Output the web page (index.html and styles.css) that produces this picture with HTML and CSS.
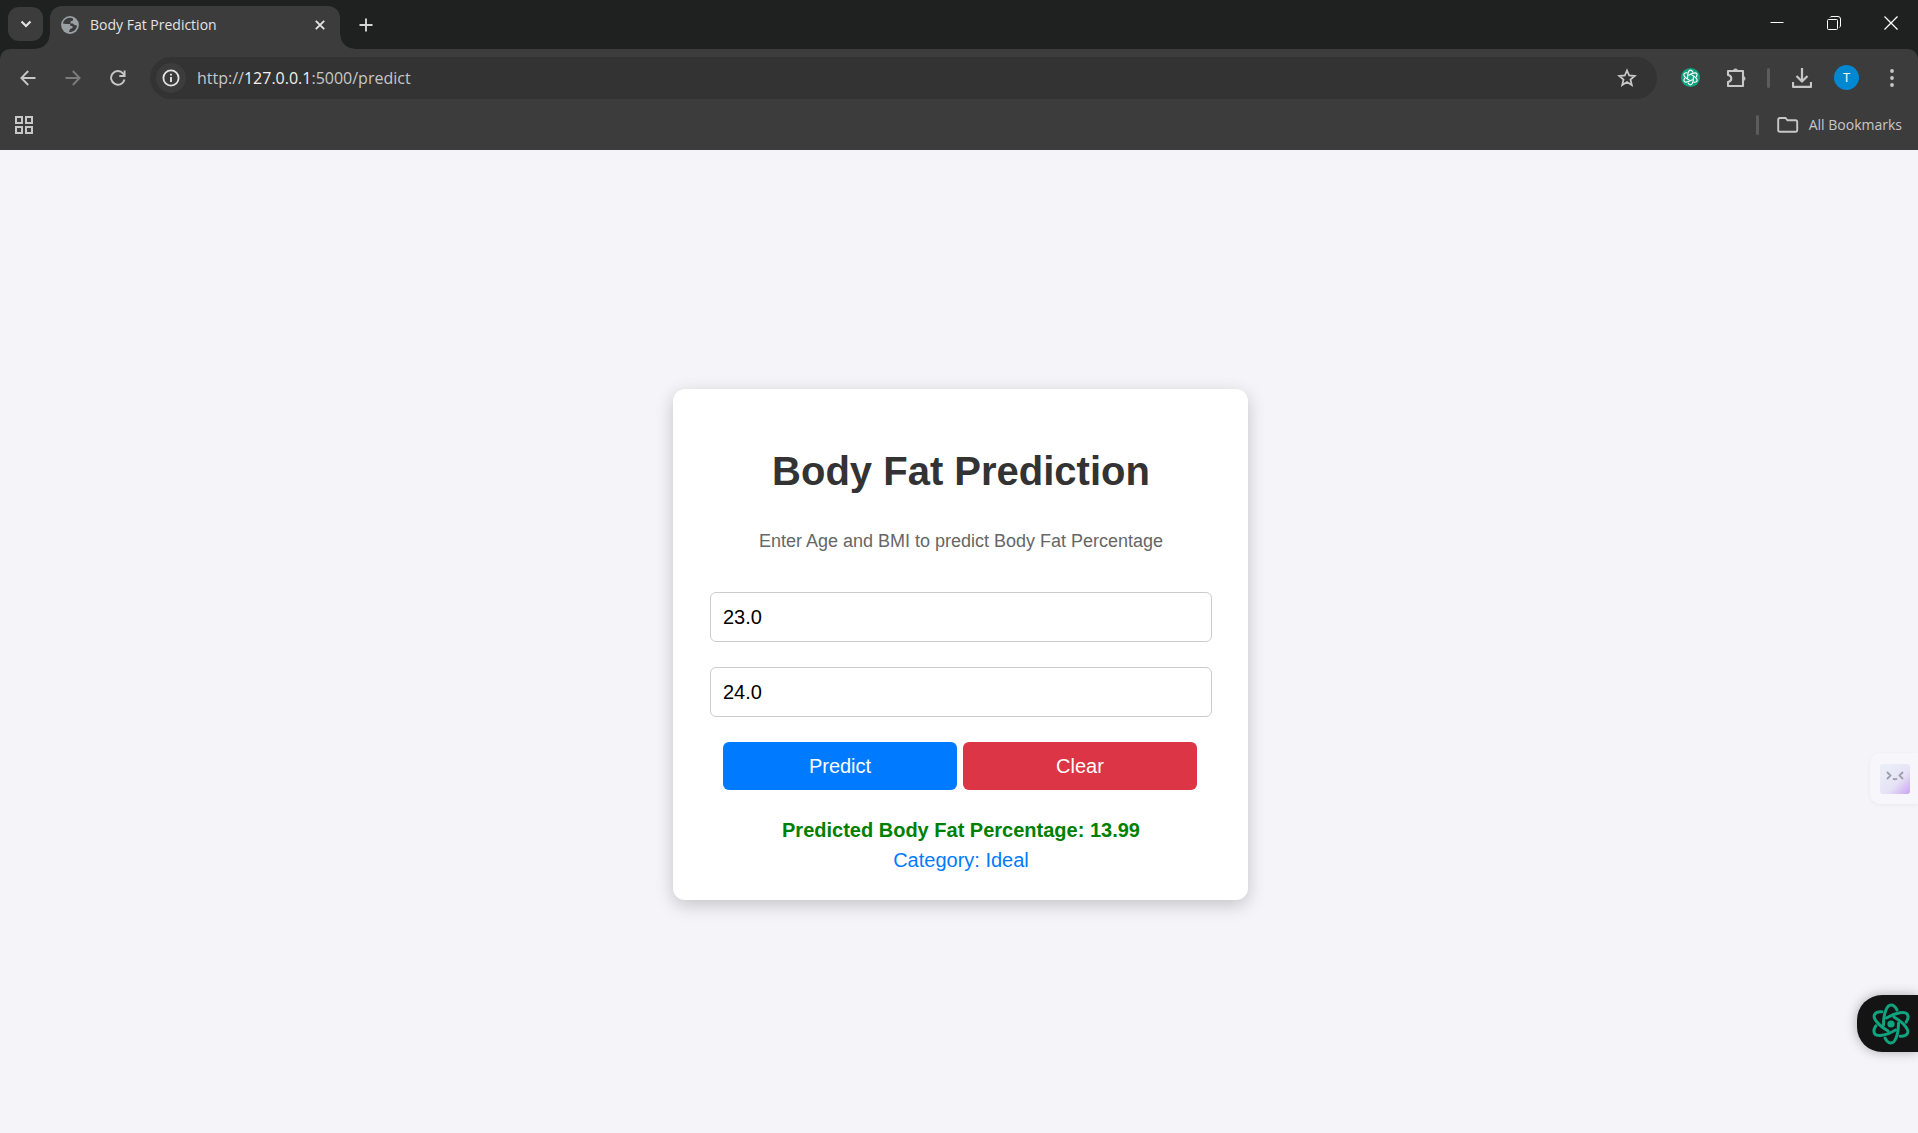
FILE: index.html
```html
<!DOCTYPE html>
<html lang="en">
<head>
<meta charset="utf-8">
<title>Body Fat Prediction</title>
<link rel="stylesheet" href="styles.css">
</head>
<body>
<svg class="defs" aria-hidden="true">
  <symbol id="knot" viewBox="-22 -22 44 44">
    <g id="petals" fill="none" stroke="currentColor" stroke-linecap="round" stroke-linejoin="round">
      <path id="petal" d="M6 -14C4 -18 2 -19 0 -19C-4 -19 -7.500 -11 -7.500 1"/>
      <use href="#petal" transform="rotate(60)"/>
      <use href="#petal" transform="rotate(120)"/>
      <use href="#petal" transform="rotate(180)"/>
      <use href="#petal" transform="rotate(240)"/>
      <use href="#petal" transform="rotate(300)"/>
    </g>
  </symbol>
</svg>
<header class="browser">
  <div class="tabstrip">
    <button class="tab-search" aria-label="Search tabs"><svg width="12" height="8" viewBox="0 0 12 8"><path d="M1.5 1.5L6 6L10.500 1.500" fill="none" stroke="#e3e3e3" stroke-width="2.200"/></svg></button>
    <div class="tab">
      <svg class="globe" width="18" height="18" viewBox="0 0 18 18"><circle cx="9" cy="9" r="8.900" fill="#9aa0a6"/><path d="M8 2C5 2 2.300 4.500 2 7.500L5 8L9 8L9.500 10H11.500V12L9 13L8 16C12 16.500 15.800 13.500 16 9.500L13.500 9L12 7.500H9.500V5.500L12 4.500V2.500C11 2 9.500 1.500 8 2Z" fill="#3c3c3c"/><path d="M2 8.500L5.500 12V13L7 14V16C4 15.500 1.800 12.500 2 8.500Z" fill="#9aa0a6"/></svg>
      <span class="tab-title">Body Fat Prediction</span>
      <button class="plain" aria-label="Close tab"><svg width="10" height="10" viewBox="0 0 10 10"><path d="M.8.8L9.200 9.200M9.200.8L.8 9.200" stroke="#e3e3e3" stroke-width="1.900"/></svg></button>
    </div>
    <button class="plain new-tab" aria-label="New tab"><svg width="14" height="14" viewBox="0 0 14 14"><path d="M7 .5V13.500M.5 7H13.500" stroke="#d5d5d5" stroke-width="1.900"/></svg></button>
    <div class="window-controls">
      <button class="plain" aria-label="Minimize"><svg width="14" height="14" viewBox="0 0 14 14"><path d="M.5 6.500H13.500" stroke="#fff"/></svg></button>
      <button class="plain" aria-label="Restore"><svg width="14" height="14" viewBox="0 0 14 14"><rect x=".5" y="3.500" width="10" height="10" rx="1" fill="none" stroke="#fff"/><path d="M3 1.500Q3.500.5 5 .5H11Q13.500.5 13.500 3V9Q13.500 11 12.500 11.500" fill="none" stroke="#fff"/></svg></button>
      <button class="plain" aria-label="Close"><svg width="14" height="14" viewBox="0 0 14 14"><path d="M.5.5L13.500 13.500M13.500.5L.5 13.500" stroke="#fff" stroke-width="1.300"/></svg></button>
    </div>
  </div>
  <div class="toolbar">
    <button class="slot" aria-label="Back"><svg width="16" height="16" viewBox="0 0 16 16"><path d="M15.500 8H1.800M8.200 1L1.400 8L8.200 15" fill="none" stroke="#c7c7c7" stroke-width="1.900"/></svg></button>
    <button class="slot" aria-label="Forward"><svg width="16" height="16" viewBox="0 0 16 16"><path d="M.5 8H14.200M7.800 1L14.600 8L7.800 15" fill="none" stroke="#7c7c7c" stroke-width="1.900"/></svg></button>
    <button class="slot" aria-label="Reload"><svg width="16" height="16" viewBox="0 0 16 16"><path d="M14.500 9.500A6.800 6.800 0 1 1 13.200 3.600L14.500 5M14.600 .5V6H9.300" fill="none" stroke="#c7c7c7" stroke-width="1.900"/></svg></button>
    <div class="omnibox">
      <button class="site-info" aria-label="Site information"><svg width="18" height="18" viewBox="0 0 18 18"><circle cx="9" cy="9" r="7.600" fill="none" stroke="#e3e3e3" stroke-width="1.800"/><path d="M9 8V13M9 4.700V6.600" stroke="#e3e3e3" stroke-width="1.900"/></svg></button>
      <div class="url">http://<span class="host">127.0.0.1</span>:5000/predict</div>
      <button class="plain" aria-label="Bookmark this page"><svg width="20" height="20" viewBox="0 0 20 20"><path d="M10 2.500L12.200 7.500L17.700 8L13.500 11.600L14.800 17L10 14.100L5.200 17L6.500 11.600L2.300 8L7.800 7.500Z" fill="none" stroke="#c7c7c7" stroke-width="1.800"/></svg></button>
    </div>
    <button class="slot" aria-label="Assistant extension"><span class="ext"><svg width="17" height="17"><use href="#knot"/></svg></span></button>
    <button class="slot" aria-label="Extensions"><svg width="22" height="22" viewBox="0 0 22 22"><path d="M3 4H18V19H3V15C5.700 14.500 6.300 13 6.300 11.500S5.700 8.500 3 8Z" fill="none" stroke="#c7c7c7" stroke-width="2.100" stroke-linejoin="round"/><path d="M8 4A2.600 2.800 0 0 1 13 4ZM18 9A2.800 2.600 0 0 1 18 14Z" fill="#c7c7c7" stroke="#c7c7c7"/></svg></button>
    <span class="divider"></span>
    <button class="slot" aria-label="Downloads"><svg width="20" height="20" viewBox="0 0 20 20"><path d="M10 0V13M4.500 8L10 13.500L15.500 8M1 14V18.800H19V14" fill="none" stroke="#c7c7c7" stroke-width="2.200" stroke-linejoin="round"/></svg></button>
    <button class="slot" aria-label="Profile"><span class="avatar">T</span></button>
    <button class="slot" aria-label="Menu"><svg width="4" height="18" viewBox="0 0 4 18" fill="#c7c7c7"><circle cx="2" cy="2" r="1.900"/><circle cx="2" cy="9" r="1.900"/><circle cx="2" cy="16" r="1.900"/></svg></button>
  </div>
  <div class="bookmarks">
    <button class="plain" aria-label="Apps"><svg width="18" height="18" viewBox="0 0 18 18" fill="none" stroke="#c7c7c7" stroke-width="2"><path d="M1 1H7V7H1ZM11 1H17V7H11ZM1 11H7V17H1ZM11 11H17V17H11Z"/></svg></button>
    <div class="all">
      <span class="divider"></span>
      <button class="plain all-bookmarks"><svg width="22" height="16" viewBox="0 0 22 16"><path d="M3 1H8.500L10.500 3.300H18.500Q20.200 3.300 20.200 5V13Q20.200 14.800 18.500 14.800H3Q1.200 14.800 1.200 13V2.700Q1.200 1 3 1Z" fill="none" stroke="#c7c7c7" stroke-width="1.900"/></svg>All Bookmarks</button>
    </div>
  </div>
</header>
<main class="page">
  <section class="card">
    <h1>Body Fat Prediction</h1>
    <p class="intro">Enter Age and BMI to predict Body Fat Percentage</p>
    <form>
      <input class="field" type="text" aria-label="Age" value="23.0">
      <input class="field" type="text" aria-label="BMI" value="24.0">
      <div class="actions">
        <button class="btn predict" type="submit">Predict</button>
        <button class="btn clear" type="button">Clear</button>
      </div>
    </form>
    <p class="result">Predicted Body Fat Percentage: 13.99</p>
    <p class="category">Category: Ideal</p>
  </section>
</main>
<button class="widget face" aria-label="Helper"><svg width="30" height="30" viewBox="0 0 30 30"><defs><linearGradient id="tint" x1=".2" y1=".2" x2="1" y2="1"><stop offset="0" stop-color="#e9edf8"/><stop offset=".5" stop-color="#e6e2f5"/><stop offset="1" stop-color="#c9a4ee"/></linearGradient></defs><rect width="30" height="30" rx="3" fill="url(#tint)"/><path d="M7 8L10.500 11.500L7 15M23 8L19.500 11.500L23 15M13 14.500Q15 16 17 14.500" fill="none" stroke="#9c9fa8" stroke-width="1.800"/></svg></button>
<button class="widget assistant" aria-label="Open assistant"><svg width="44" height="44" viewBox="-22 -22 44 44"><use href="#petals"/><circle r="3.600" fill="currentColor"/></svg></button>
</body>
</html>
```
FILE: styles.css
```css
* { box-sizing: border-box; }

body {
  margin: 0;
  min-height: 100vh;
  display: flex;
  flex-direction: column;
  background: #f4f4f9;
  font-family: "Liberation Sans", Arial, sans-serif;
}

button {
  border: 0;
  font-family: inherit;
  cursor: pointer;
}

svg { display: block; flex: none; }

.defs { position: absolute; width: 0; height: 0; }

/* Browser frame */
.browser {
  background: #1f2020;
  font-family: "Open Sans", "Noto Sans", sans-serif;
  color: #c7c7c7;
}

.plain, .slot {
  display: flex;
  align-items: center;
  justify-content: center;
  padding: 0;
  background: none;
  color: inherit;
}

.tabstrip {
  display: flex;
  align-items: flex-end;
  height: 49px;
  padding-left: 8px;
}

.tab-search {
  display: flex;
  align-items: center;
  justify-content: center;
  width: 35px;
  height: 34px;
  margin: 0 7px 8px 0;
  padding: 0;
  border-radius: 11px;
  background: #3c3c3c;
}

.tab {
  position: relative;
  display: flex;
  align-items: center;
  width: 290px;
  height: 43px;
  padding: 0 15px 6px 11px;
  border-radius: 12px 12px 0 0;
  background: #3c3c3c;
}

.tab::before, .tab::after {
  content: "";
  position: absolute;
  bottom: 0;
  width: 14px;
  height: 14px;
}

.tab::before {
  right: 100%;
  background: radial-gradient(circle at 0 0, transparent 13px, #3c3c3c 14px);
}

.tab::after {
  left: 100%;
  background: radial-gradient(circle at 100% 0, transparent 13px, #3c3c3c 14px);
}

.tab-title {
  flex: 1;
  margin-left: 11px;
  color: #e3e3e3;
  font-size: 14px;
  line-height: 20px;
}

.new-tab { width: 52px; height: 49px; }

.window-controls {
  display: flex;
  gap: 43px;
  margin-left: auto;
  padding: 0 20px 19px 0;
}

.toolbar {
  display: flex;
  align-items: center;
  height: 57px;
  padding: 0 4px 0 5px;
  border-radius: 10px 10px 0 0;
  background: #3c3c3c;
}

.slot { width: 45px; height: 42px; }

.omnibox {
  flex: 1;
  display: flex;
  align-items: center;
  height: 42px;
  margin: 0 11px 0 10px;
  padding: 0 20px 0 6px;
  border-radius: 21px;
  background: #333333;
}

.site-info {
  display: flex;
  align-items: center;
  justify-content: center;
  width: 30px;
  height: 30px;
  padding: 0;
  border-radius: 50%;
  background: #3c3c3c;
}

.url {
  flex: 1;
  margin-left: 11px;
  font-size: 16px;
  line-height: 24px;
}

.host { color: #f0f0f0; }

.ext {
  display: flex;
  align-items: center;
  justify-content: center;
  width: 19px;
  height: 19px;
  border-radius: 50%;
  background: #10a37f;
  color: #fff;
  stroke-width: 3px;
}

.divider {
  width: 3px;
  height: 20px;
  margin: 0 9px;
  border-radius: 2px;
  background: #5c5c5c;
}

.avatar {
  width: 25px;
  height: 25px;
  border-radius: 50%;
  background: #0288d1;
  color: #fff;
  font-size: 13px;
  line-height: 25px;
}

.bookmarks {
  display: flex;
  align-items: center;
  justify-content: space-between;
  height: 44px;
  padding: 0 16px 7px 15px;
  background: #3c3c3c;
}

.all { display: flex; align-items: center; }

.all-bookmarks {
  gap: 10px;
  margin-left: 9px;
  font-family: inherit;
  font-size: 14px;
  line-height: 20px;
}

/* Prediction page */
.page {
  flex: 1;
  display: flex;
  align-items: center;
  justify-content: center;
  padding: 6px 0 0 3px;
}

.card {
  width: 575px;
  max-width: 100%;
  padding: 37px 36px 25px 37px;
  border-radius: 12px;
  background: #fff;
  box-shadow: 0 5px 18px rgba(0, 0, 0, 0.2);
  text-align: center;
}

h1 {
  margin: 22px 0 32px;
  color: #333;
  font-size: 40px;
  line-height: 46px;
}

.intro {
  margin: 0 0 36px;
  color: #666;
  font-size: 18px;
  line-height: 30px;
}

.field {
  display: block;
  width: 100%;
  height: 50px;
  margin: 0 0 25px;
  padding: 0 12px;
  border: 1px solid #ccc;
  border-radius: 6px;
  background: #fff;
  color: #000;
  font-family: inherit;
  font-size: 20px;
}

.actions {
  display: flex;
  gap: 6px;
  margin-bottom: 25px;
  padding: 0 15px 0 13px;
}

.btn {
  flex: 1;
  height: 48px;
  border-radius: 6px;
  color: #fff;
  font-size: 20px;
}

.predict { background: #007bff; }

.clear { background: #dc3545; }

.result, .category {
  margin: 0;
  font-size: 20px;
  line-height: 30px;
}

.result { color: green; font-weight: bold; }

.category { color: #007bff; }

/* Extension widgets pinned to the window edge */
.widget {
  position: fixed;
  right: 0;
  display: flex;
  align-items: center;
  padding: 0;
}

.face {
  top: 753px;
  width: 48px;
  height: 51px;
  padding-left: 10px;
  border-radius: 10px 0 0 10px;
  background: #f6f6fb;
  box-shadow: 0 1px 4px rgba(0, 0, 0, 0.05);
}

.assistant {
  bottom: 81px;
  width: 61px;
  height: 57px;
  padding-left: 12px;
  border-radius: 25px 0 0 25px;
  background: #141414;
  box-shadow: 0 0 12px rgba(0, 0, 0, 0.3);
  color: #10a37f;
  stroke-width: 3px;
}
```
